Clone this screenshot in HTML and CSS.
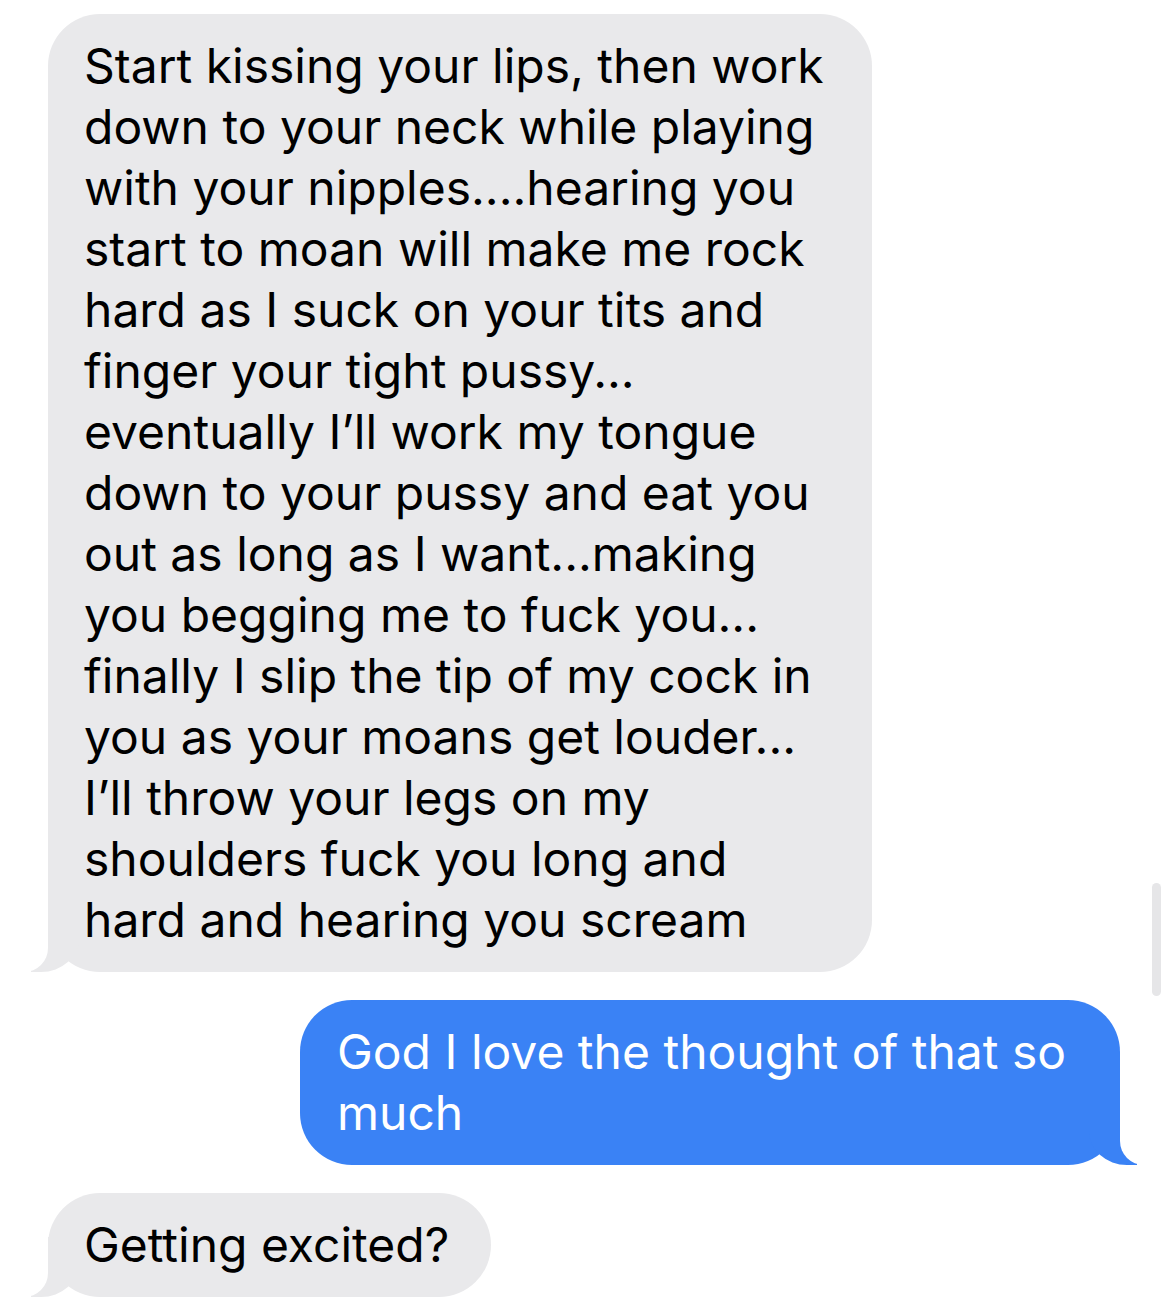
FILE: index.html
```html
<!DOCTYPE html>
<html lang="en">
<head>
<meta charset="utf-8">
<title>Messages</title>
<link rel="stylesheet" href="styles.css">
</head>
<body>
  <main class="thread">
    <div class="msg them wide">
      Start kissing your lips, then work<br>
      down to your neck while playing<br>
      with your nipples....hearing you<br>
      start to moan will make me rock<br>
      hard as I suck on your tits and<br>
      finger your tight pussy...<br>
      eventually I’ll work my tongue<br>
      down to your pussy and eat you<br>
      out as long as I want...making<br>
      you begging me to fuck you...<br>
      finally I slip the tip of my cock in<br>
      you as your moans get louder...<br>
      I’ll throw your legs on my<br>
      shoulders fuck you long and<br>
      hard and hearing you scream
    </div>
    <div class="msg me wide">
      God I love the thought of that so<br>
      much
    </div>
    <div class="msg them short">Getting excited?</div>
  </main>
  <div class="scrollbar"></div>
</body>
</html>
```
FILE: styles.css
```css
html, body {
  margin: 0;
  background: #ffffff;
}

body {
  width: 1170px;
  height: 1315px;
  overflow: hidden;
  position: relative;
  font-family: Inter, "Noto Sans", "Liberation Sans", sans-serif;
}

.thread {
  display: flex;
  flex-direction: column;
  gap: 28px;
  padding: 14px 50px 0 48px;
}

.msg {
  position: relative;
  box-sizing: border-box;
  padding: 21px 37px 22px 36px;
  border-radius: 52px;
  font-size: 48px;
  line-height: 61px;
  letter-spacing: 0;
  white-space: nowrap;
}

.them.wide {
  width: 824px;
}

.me.wide {
  width: 820px;
  padding-left: 37px;
}

.them.short {
  padding-right: 42px;
}

.them {
  align-self: flex-start;
  background: #e9e9eb;
  color: #000000;
}

.me {
  align-self: flex-end;
  background: #3a82f5;
  color: #ffffff;
}

/* bubble tails */
.msg::before,
.msg::after {
  content: "";
  position: absolute;
  bottom: 0;
  height: 60px;
}

.them::before {
  left: -17px;
  border-right: 48px solid #e9e9eb;
  border-bottom-right-radius: 38px 34px;
}

.them::after {
  left: -62px;
  width: 62px;
  background: #ffffff;
  border-bottom-right-radius: 24px;
}

.me::before {
  right: -17px;
  border-left: 48px solid #3a82f5;
  border-bottom-left-radius: 38px 34px;
}

.me::after {
  right: -62px;
  width: 62px;
  background: #ffffff;
  border-bottom-left-radius: 24px;
}

.scrollbar {
  position: absolute;
  left: 1152px;
  top: 883px;
  width: 9px;
  height: 113px;
  border-radius: 5px;
  background: #e6e6e8;
}
```
